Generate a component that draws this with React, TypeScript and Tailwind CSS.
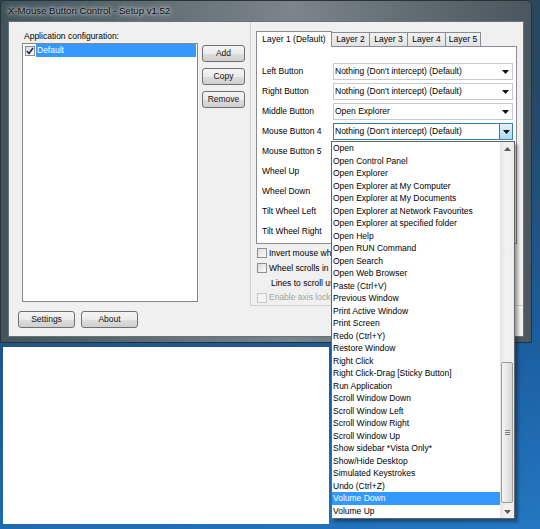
import React from "react";

const items = [
  "Open",
  "Open Control Panel",
  "Open Explorer",
  "Open Explorer at My Computer",
  "Open Explorer at My Documents",
  "Open Explorer at Network Favourites",
  "Open Explorer at specified folder",
  "Open Help",
  "Open RUN Command",
  "Open Search",
  "Open Web Browser",
  "Paste (Ctrl+V)",
  "Previous Window",
  "Print Active Window",
  "Print Screen",
  "Redo (Ctrl+Y)",
  "Restore Window",
  "Right Click",
  "Right Click-Drag [Sticky Button]",
  "Run Application",
  "Scroll Window Down",
  "Scroll Window Left",
  "Scroll Window Right",
  "Scroll Window Up",
  "Show sidebar *Vista Only*",
  "Show/Hide Desktop",
  "Simulated Keystrokes",
  "Undo (Ctrl+Z)",
  "Volume Down",
  "Volume Up",
];

// rows under the open list keep an empty combo, the list hides them anyway
const rows = [
  { label: "Left Button", value: "Nothing (Don't intercept) (Default)" },
  { label: "Right Button", value: "Nothing (Don't intercept) (Default)" },
  { label: "Middle Button", value: "Open Explorer" },
  { label: "Mouse Button 4", value: "Nothing (Don't intercept) (Default)", focused: true },
  { label: "Mouse Button 5", value: "" },
  { label: "Wheel Up", value: "" },
  { label: "Wheel Down", value: "" },
  { label: "Tilt Wheel Left", value: "" },
  { label: "Tilt Wheel Right", value: "" },
];

function Arrow({ up }: { up?: boolean }) {
  return (
    <svg width="7" height="4" viewBox="0 0 7 4">
      <path d={up ? "M0 4h7L3.5 0z" : "M0 0h7L3.5 4z"} fill={up ? "#5a5a5a" : "#111"} />
    </svg>
  );
}

function Button({ text, w }: { text: string; w: string }) {
  return (
    <div
      className={`${w} flex h-[17px] items-center justify-center rounded-[3px] border border-[#707070] bg-[linear-gradient(#f4f4f4_0%,#ebebeb_50%,#dddddd_51%,#cfcfcf_100%)] text-[#111]`}
    >
      {text}
    </div>
  );
}

function Combo({ value, focused }: { value: string; focused?: boolean }) {
  return (
    <div
      className={`flex h-[17px] w-[180px] items-center bg-white border ${
        focused ? "border-[#3c7fb1]" : "border-[#c6c9cf]"
      }`}
    >
      <span className="flex-1 overflow-hidden whitespace-nowrap pl-[1px]">{value}</span>
      <div
        className={`flex h-full w-[13px] items-center justify-center ${
          focused ? "border-l border-[#3c7fb1] bg-[linear-gradient(#e5f4fc,#a7d9f5)]" : ""
        }`}
      >
        <Arrow />
      </div>
    </div>
  );
}

function Check({ checked, disabled }: { checked?: boolean; disabled?: boolean }) {
  return (
    <div
      className={`flex h-[10px] w-[10px] shrink-0 items-center justify-center border ${
        disabled
          ? "border-[#c8c8c8] bg-[#f4f4f4]"
          : "border-[#8f8f8f] bg-[linear-gradient(135deg,#dcdcdc,#fbfbfb)]"
      }`}
    >
      {checked && (
        <svg width="8" height="8" viewBox="0 0 8 8">
          <path d="M1 4l2 2.5L7 1" fill="none" stroke="#1d2a40" strokeWidth="1.5" />
        </svg>
      )}
    </div>
  );
}

export default function App() {
  return (
    <div className="relative h-[529px] w-[540px] overflow-hidden bg-[linear-gradient(170deg,#2e4450_0%,#24496a_35%,#1b5e9f_70%,#2477c2_100%)] font-['Liberation_Sans',Arial,sans-serif] text-[8.5px] leading-none text-black">
      {/* window behind */}
      <div className="absolute left-[3px] top-[347px] h-[177px] w-[326px] bg-white" />

      {/* main window */}
      <div className="absolute left-0 top-0 h-[343px] w-[532px] rounded-t-[5px] border border-[#26343a] bg-[linear-gradient(90deg,#41545b_0%,#68737a_35%,#7b858a_55%,#5f6a70_80%,#4a575e_100%)]">
        <div className="flex h-[20px] items-center pl-[7px] text-[9.6px] text-[#0c0c0c] [text-shadow:0_0_6px_#fff,0_0_3px_#ffffffcc]">
          X-Mouse Button Control - Setup v1.52
        </div>

        <div className="mx-[7px] flex h-[316px] flex-col border border-[#65737a] bg-[#f0f0f0]">
          <div className="flex h-[284px]">
            {/* left group */}
            <div className="flex w-[241px] flex-col pl-[13px] pt-[7px]">
              <div className="flex h-[14px] items-center pl-[2px]">Application configuration:</div>
              <div className="flex">
                <div className="h-[259px] w-[176px] border border-[#828790] bg-white">
                  <div className="flex h-[13px] items-center pl-[2px]">
                    <Check checked />
                    <div className="ml-[1px] mr-[1px] flex h-full flex-1 items-center bg-[#3399ff] pl-[1px] text-white">
                      Default
                    </div>
                  </div>
                </div>
                <div className="ml-[4px] flex flex-col gap-[6px] pt-[2px]">
                  <Button text="Add" w="w-[43px]" />
                  <Button text="Copy" w="w-[43px]" />
                  <Button text="Remove" w="w-[43px]" />
                </div>
              </div>
            </div>

            {/* right group */}
            <div className="flex flex-1 flex-col border-b border-l border-[#cfd3d6] pl-[5px] pt-[9px]">
              <div className="flex h-[15px] items-end">
                <div className="relative z-10 mb-[-1px] flex h-[16px] w-[76px] items-center justify-center border border-b-0 border-[#898c95] bg-white">
                  Layer 1 (Default)
                </div>
                {["Layer 2", "Layer 3", "Layer 4", "Layer 5"].map((t, i) => (
                  <div
                    key={t}
                    className={`flex h-[14px] items-center justify-center border border-b-0 border-l-0 border-[#898c95] bg-[linear-gradient(#f2f2f2,#e1e1e1)] ${
                      i === 3 ? "w-[35px]" : "w-[38px]"
                    }`}
                  >
                    {t}
                  </div>
                ))}
              </div>
              <div className="flex h-[201px] w-[261px] flex-col gap-[3px] border border-[#898c95] bg-white pl-[5px] pt-[16px]">
                {rows.map((r) => (
                  <div key={r.label} className="flex h-[17px] items-center">
                    <div className="w-[71px] whitespace-nowrap">{r.label}</div>
                    <Combo value={r.value} focused={r.focused} />
                  </div>
                ))}
              </div>
              {/* clipped where the open list starts */}
              <div className="ml-[1px] mt-[2px] flex w-[74px] flex-col overflow-hidden">
                <div className="flex h-[15px] items-center gap-[2px] whitespace-nowrap">
                  <Check />
                  <span>Invert mouse wh</span>
                </div>
                <div className="flex h-[15px] items-center gap-[2px] whitespace-nowrap">
                  <Check />
                  <span>Wheel scrolls in p</span>
                </div>
                <div className="flex h-[15px] items-center whitespace-nowrap pl-[14px]">
                  Lines to scroll usi
                </div>
                <div className="flex h-[15px] items-center gap-[2px] whitespace-nowrap text-[#a3a3a3]">
                  <Check disabled />
                  <span>Enable axis lockin</span>
                </div>
              </div>
            </div>
          </div>

          <div className="mt-[5px] flex gap-[6px] pl-[9px]">
            <Button text="Settings" w="w-[57px]" />
            <Button text="About" w="w-[57px]" />
          </div>
        </div>
      </div>

      {/* open dropdown list */}
      <div className="absolute left-[331px] top-[141px] flex h-[378px] w-[184px] border border-[#646464] bg-white shadow-[3px_3px_3px_rgba(0,0,0,0.35)]">
        <div className="flex w-[168px] flex-col">
          {items.map((it) => (
            <div
              key={it}
              className={`flex h-[12.5px] shrink-0 items-center whitespace-nowrap pl-[1px] ${
                it === "Volume Down" ? "bg-[#3399ff] text-white" : ""
              }`}
            >
              {it}
            </div>
          ))}
        </div>
        <div className="flex w-[14px] flex-col bg-[linear-gradient(90deg,#e3e3e3,#f2f2f2_40%,#ececec)]">
          <div className="flex h-[13px] items-center justify-center">
            <Arrow up />
          </div>
          <div className="h-[207px]" />
          <div className="mx-[1px] flex h-[141px] flex-col items-center justify-center gap-[1px] rounded-[2px] border border-[#9a9a9a] bg-[linear-gradient(90deg,#f6f6f6,#e6e6e6_50%,#d6d6d6)]">
            <div className="h-px w-[5px] bg-[#7a7a7a]" />
            <div className="h-px w-[5px] bg-[#7a7a7a]" />
            <div className="h-px w-[5px] bg-[#7a7a7a]" />
          </div>
          <div className="flex-1" />
          <div className="flex h-[13px] items-center justify-center">
            <svg width="7" height="4" viewBox="0 0 7 4">
              <path d="M0 0h7L3.5 4z" fill="#5a5a5a" />
            </svg>
          </div>
        </div>
      </div>
    </div>
  );
}
